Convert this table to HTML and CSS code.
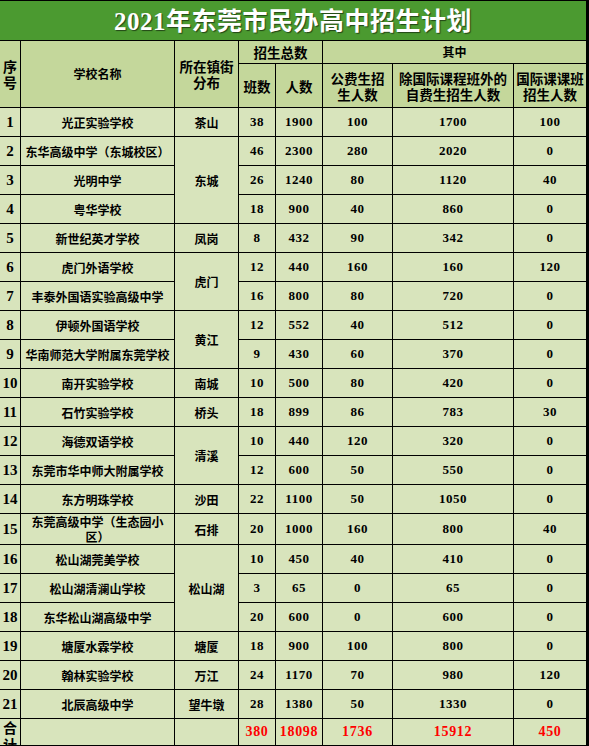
FILE: index.html
```html
<!DOCTYPE html>
<html lang="zh-CN">
<head>
<meta charset="utf-8">
<title>2021年东莞市民办高中招生计划</title>
<link rel="stylesheet" href="styles.css">
</head>
<body>
<table class="plan">
  <colgroup>
    <col class="c-no"><col class="c-name"><col class="c-town"><col class="c-cls"><col class="c-ppl"><col class="c-pub"><col class="c-self"><col class="c-intl">
  </colgroup>
  <thead>
    <tr class="r-title"><th colspan="8" class="title"><span class="yr">2021</span>年东莞市民办高中招生计划</th></tr>
    <tr class="r-h1">
      <th rowspan="2" class="h-no">序号</th>
      <th rowspan="2" class="h-small">学校名称</th>
      <th rowspan="2">所在镇街分布</th>
      <th colspan="2">招生总数</th>
      <th colspan="3" class="h-small">其中</th>
    </tr>
    <tr class="r-h2">
      <th>班数</th>
      <th>人数</th>
      <th>公费生招生人数</th>
      <th>除国际课程班外的自费生招生人数</th>
      <th>国际课课班招生人数</th>
    </tr>
  </thead>
  <tbody>
    <tr class="r-data"><td class="no">1</td><td class="name">光正实验学校</td><td class="town">茶山</td><td>38</td><td>1900</td><td>100</td><td>1700</td><td>100</td></tr>
    <tr class="r-data"><td class="no">2</td><td class="name">东华高级中学（东城校区）</td><td class="town" rowspan="3">东城</td><td>46</td><td>2300</td><td>280</td><td>2020</td><td>0</td></tr>
    <tr class="r-data"><td class="no">3</td><td class="name">光明中学</td><td>26</td><td>1240</td><td>80</td><td>1120</td><td>40</td></tr>
    <tr class="r-data"><td class="no">4</td><td class="name">粤华学校</td><td>18</td><td>900</td><td>40</td><td>860</td><td>0</td></tr>
    <tr class="r-data"><td class="no">5</td><td class="name">新世纪英才学校</td><td class="town">凤岗</td><td>8</td><td>432</td><td>90</td><td>342</td><td>0</td></tr>
    <tr class="r-data"><td class="no">6</td><td class="name">虎门外语学校</td><td class="town" rowspan="2">虎门</td><td>12</td><td>440</td><td>160</td><td>160</td><td>120</td></tr>
    <tr class="r-data"><td class="no">7</td><td class="name">丰泰外国语实验高级中学</td><td>16</td><td>800</td><td>80</td><td>720</td><td>0</td></tr>
    <tr class="r-data"><td class="no">8</td><td class="name">伊顿外国语学校</td><td class="town" rowspan="2">黄江</td><td>12</td><td>552</td><td>40</td><td>512</td><td>0</td></tr>
    <tr class="r-data"><td class="no">9</td><td class="name">华南师范大学附属东莞学校</td><td>9</td><td>430</td><td>60</td><td>370</td><td>0</td></tr>
    <tr class="r-data"><td class="no">10</td><td class="name">南开实验学校</td><td class="town">南城</td><td>10</td><td>500</td><td>80</td><td>420</td><td>0</td></tr>
    <tr class="r-data"><td class="no">11</td><td class="name">石竹实验学校</td><td class="town">桥头</td><td>18</td><td>899</td><td>86</td><td>783</td><td>30</td></tr>
    <tr class="r-data"><td class="no">12</td><td class="name">海德双语学校</td><td class="town" rowspan="2">清溪</td><td>10</td><td>440</td><td>120</td><td>320</td><td>0</td></tr>
    <tr class="r-data"><td class="no">13</td><td class="name">东莞市华中师大附属学校</td><td>12</td><td>600</td><td>50</td><td>550</td><td>0</td></tr>
    <tr class="r-data"><td class="no">14</td><td class="name">东方明珠学校</td><td class="town">沙田</td><td>22</td><td>1100</td><td>50</td><td>1050</td><td>0</td></tr>
    <tr class="r-data"><td class="no">15</td><td class="name">东莞高级中学（生态园小区）</td><td class="town">石排</td><td>20</td><td>1000</td><td>160</td><td>800</td><td>40</td></tr>
    <tr class="r-data"><td class="no">16</td><td class="name">松山湖莞美学校</td><td class="town" rowspan="3">松山湖</td><td>10</td><td>450</td><td>40</td><td>410</td><td>0</td></tr>
    <tr class="r-data"><td class="no">17</td><td class="name">松山湖清澜山学校</td><td>3</td><td>65</td><td>0</td><td>65</td><td>0</td></tr>
    <tr class="r-data"><td class="no">18</td><td class="name">东华松山湖高级中学</td><td>20</td><td>600</td><td>0</td><td>600</td><td>0</td></tr>
    <tr class="r-data"><td class="no">19</td><td class="name">塘厦水霖学校</td><td class="town">塘厦</td><td>18</td><td>900</td><td>100</td><td>800</td><td>0</td></tr>
    <tr class="r-data"><td class="no">20</td><td class="name">翰林实验学校</td><td class="town">万江</td><td>24</td><td>1170</td><td>70</td><td>980</td><td>120</td></tr>
    <tr class="r-data"><td class="no">21</td><td class="name">北辰高级中学</td><td class="town">望牛墩</td><td>28</td><td>1380</td><td>50</td><td>1330</td><td>0</td></tr>
    <tr class="r-total">
      <td class="no total-label"><div class="clip">合计</div></td>
      <td></td><td></td>
      <td class="sum">380</td><td class="sum">18098</td><td class="sum">1736</td><td class="sum">15912</td><td class="sum">450</td>
    </tr>
  </tbody>
</table>
</body>
</html>
```

FILE: styles.css
```css
html, body {
  margin: 0;
  padding: 0;
  background: #ffffff;
}

body {
  width: 589px;
  height: 746px;
  overflow: hidden;
  font-family: "Liberation Serif", "Noto Sans CJK SC", serif;
  color: #000;
}

.plan {
  border-collapse: separate;
  border-spacing: 0;
  table-layout: fixed;
  width: 589px;
  border-top: 1px solid #000;
  border-right: 2px solid #000;
  border-bottom: 3px solid #000;
}

.c-no { width: 21px; }
.c-name { width: 154px; }
.c-town { width: 64px; }
.c-cls { width: 37px; }
.c-ppl { width: 47px; }
.c-pub { width: 70px; }
.c-self { width: 121px; }
.c-intl { width: 73px; }

.plan th,
.plan td {
  box-sizing: border-box;
  padding: 0;
  border-right: 1px solid #000;
  border-bottom: 1px solid #000;
  text-align: center;
  vertical-align: middle;
  font-weight: 700;
  overflow: hidden;
  text-spacing-trim: space-all;
}

.r-title { height: 40px; }
.r-h1 { height: 23px; }
.r-h2 { height: 44px; }
.r-data { height: 29px; }
.r-total { height: 27px; }

.title {
  background: #4b9a30;
  color: #ffffff;
  font-family: "Noto Sans CJK SC", sans-serif;
  font-size: 25px;
  letter-spacing: 0.5px;
  line-height: 30px;
  text-shadow: 1px 1px 1px rgba(0, 0, 0, 0.55);
}

.title .yr {
  font-family: "Liberation Serif", serif;
}

.plan thead th:not(.title) {
  background: #c4d79b;
  font-family: "Noto Sans CJK SC", sans-serif;
  font-size: 13.5px;
  line-height: 16px;
  padding: 0 2px;
}

.plan thead th.h-small {
  font-size: 12px;
}

.plan thead th.h-no {
  font-size: 14px;
  line-height: 16px;
  padding: 0;
}

.plan tbody td {
  background: #d8e4bc;
  font-size: 13px;
  letter-spacing: 0.5px;
  line-height: 14px;
}

.plan tbody td.no {
  font-size: 15px;
  letter-spacing: 0;
}

.plan tbody td.name,
.plan tbody td.town {
  font-family: "Noto Sans CJK SC", sans-serif;
  font-size: 12px;
  letter-spacing: 0;
  line-height: 15px;
}

.plan tbody td.name {
  padding: 0 2px;
}

.plan tbody td.sum {
  color: #ff0000;
  font-size: 14px;
  letter-spacing: 0.7px;
}

.total-label {
  vertical-align: top;
}

.total-label .clip {
  height: 26px;
  overflow: hidden;
  font-family: "Noto Sans CJK SC", sans-serif;
  font-size: 14px;
  line-height: 17px;
}
```
